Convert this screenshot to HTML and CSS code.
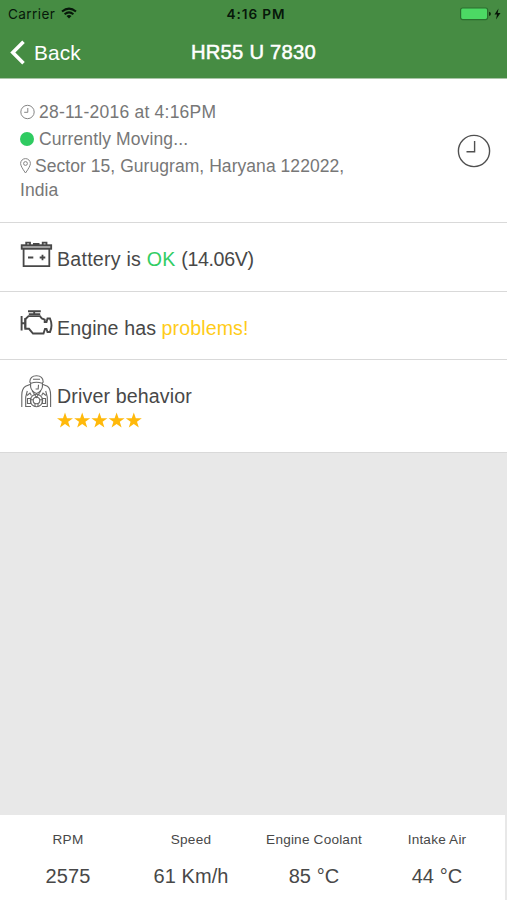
FILE: index.html
```html
<!DOCTYPE html>
<html lang="en">
<head>
<meta charset="utf-8">
<title>HR55 U 7830</title>
<link rel="stylesheet" href="styles.css">
</head>
<body>
<div class="screen">
  <header class="header">
    <div class="status">
      <div class="carrier"><span>Carrier</span>
        <svg class="wifi" width="16" height="12" viewBox="0 0 16 12" fill="none" stroke="#07180a" stroke-width="2"><path d="M1 4.6Q8-1.4 15 4.6M3.6 7.2Q8 3.6 12.4 7.2"/><path d="M8 11.6 5.5 9Q8 7 10.5 9Z" fill="#07180a" stroke="none"/></svg>
      </div>
      <div class="time">4:16 PM</div>
      <div class="power">
        <svg width="42" height="14" viewBox="0 0 42 14"><rect x=".6" y="1" width="27" height="11.6" rx="2" fill="#4cd964" stroke="#2a6e2e" stroke-width="1.2"/><path d="M29 4.7q2 .4 2 2.1t-2 2.1z" fill="#10300f"/><path d="M38.5 1.5 34.5 7.5H37L36 12.5 40.5 6H37.7Z" fill="#071507"/></svg>
      </div>
    </div>
    <nav class="nav">
      <div class="back">
        <svg width="16" height="26" viewBox="0 0 16 26" fill="none" stroke="#fff" stroke-width="3.6"><path d="M14.5 1.8 3.8 12.5 14.5 23.2"/></svg>
        <span>Back</span>
      </div>
      <h1 class="title">HR55 U 7830</h1>
      <div></div>
    </nav>
  </header>
  <main class="list">
    <section class="summary">
      <div class="details">
        <div class="line date"><svg class="line-clock" width="15" height="16" viewBox="0 0 15 16" fill="none" stroke="#858585"><circle cx="7.5" cy="8" r="6.7"/><path d="M7.8 4V8.3H4.2"/></svg>28-11-2016 at 4:16PM</div>
        <div class="line moving"><span class="dot"></span>Currently Moving...</div>
        <div class="line address"><svg class="pin" width="11" height="16" viewBox="0 0 11 16" fill="none" stroke="#858585"><path d="M5.5 15Q.6 8.2.6 5.5a4.9 4.9 0 0 1 9.8 0Q10.4 8.2 5.5 15Z"/><circle cx="5.5" cy="5.5" r="1.9"/></svg>Sector 15, Gurugram, Haryana 122022,<br>India</div>
      </div>
      <svg class="history" width="34" height="34" viewBox="0 0 34 34" fill="none" stroke="#505050" stroke-width="1.4"><circle cx="17" cy="17" r="15.6"/><path d="M17.6 7V17.7H9.5"/></svg>
    </section>
    <section class="row">
      <svg class="row-icon" width="34" height="34" viewBox="0 0 34 34" fill="none" stroke="#484848" stroke-width="1.8"><rect x="1.7" y="4.2" width="29.5" height="3.6" fill="#aaa"/><path d="M3.6 8V25.2H29.3V8M6.2 4V1.6H10V4M22.7 4V1.6H26.5V4M13 3H19.5M8 16.5H13.3M19.7 16.5H25.3M22.5 13.7V19.3"/></svg>
      <div class="label battery">Battery is <span class="ok">OK</span> <span class="volts">(14.06V)</span></div>
    </section>
    <section class="row">
      <svg class="row-icon" width="34" height="34" viewBox="0 0 34 34" fill="none" stroke="#484848" stroke-width="1.9"><path d="M1.6 6V20.5M1.6 13.3H5.3M5.3 8V18.5M8 1.2H20.8M8.8 4.1H20.2M14.2 1.2V4"/><path d="M5.3 9.2 8.5 6.1H20L21.8 8.5 24.7 9.7V12H26.5L27.5 8.5H30Q33 15.5 30 22H27.5L26.5 19H25L23.5 23.5H13L9 18.8H5.3Z"/></svg>
      <div class="label engine">Engine has <span class="warn">problems!</span></div>
    </section>
    <section class="row driver">
      <svg class="row-icon" width="32" height="34" viewBox="0 0 32 34" fill="none" stroke="#666" stroke-width="1.1"><path d="M8.8 7Q9 .8 15.5.8T22.2 7L21 8.3Q15.5 6.2 10 8.3ZM12 4.2H19M9.6 8V12Q10.5 16.4 15.5 18.5 20.5 16.4 21.4 12V8M14.6 14H17.2L17.5 9.8"/><path d="M9.6 9.3 4.6 11.2Q.8 13.5.8 20V32M21.4 9.3 26.4 11.2Q29.6 13.5 29.6 20V32M11 15.5 15.5 22.5 20 15.5M6.3 16 4.7 22V31.5H10M24.7 16 26.3 22V31.5H21M6 20.5 9 18 10.4 20.5M25 20.5 22 18 20.6 20.5"/><circle cx="15.5" cy="25.5" r="6.2"/><circle cx="15.5" cy="25.5" r="3.3"/><path d="M9.5 24.7H12.4M18.6 24.7H21.5M14 28.8V31.5M17 28.8V31.5M6.5 23.5H9.8V28.5H6.5ZM24.5 23.5H21.2V28.5H24.5Z"/></svg>
      <div class="label behavior">Driver behavior
        <div class="stars">
          <svg width="86" height="17" viewBox="0 0 86 17" fill="#ffb90b"><defs><path id="star" d="M8 .5 10 6.2H16L11.2 9.8 13 15.6 8 12.1 3 15.6 4.8 9.8 0 6.2H6Z"/></defs><use href="#star"/><use href="#star" x="17.2"/><use href="#star" x="34.4"/><use href="#star" x="51.6"/><use href="#star" x="68.8"/></svg>
        </div>
      </div>
    </section>
  </main>
  <footer class="metrics">
    <div class="metric"><span class="name">RPM</span><span class="value">2575</span></div>
    <div class="metric"><span class="name">Speed</span><span class="value">61 Km/h</span></div>
    <div class="metric"><span class="name">Engine Coolant</span><span class="value">85 °C</span></div>
    <div class="metric"><span class="name">Intake Air</span><span class="value">44 °C</span></div>
  </footer>
</div>
</body>
</html>
```

FILE: styles.css
```css
* { box-sizing: border-box; }
body { margin: 0; background: #e8e8e8; color: #484848; font-family: "Liberation Sans", Arial, sans-serif; }
svg { display: block; flex: none; }
.screen { width: 507px; height: 900px; display: flex; flex-direction: column; overflow: hidden; }
.header { height: 79px; background: #468c43; border-bottom: 1px solid #a9c5a8; }
.status { height: 27px; display: grid; grid-template-columns: 1fr auto 1fr; align-items: center; padding: 0 5px 0 8px; color: #07180a; font: 13.6px/26px Inter, sans-serif; }
.carrier { display: flex; align-items: center; gap: 6px; letter-spacing: .4px; }
.carrier svg { margin-top: -2px; }
.time { font-weight: 600; font-size: 13.6px; letter-spacing: .9px; padding-left: 2px; }
.power { justify-self: end; }
.nav { height: 51px; display: grid; grid-template-columns: 1fr auto 1fr; align-items: center; padding: 0 0 0 9px; color: #fff; }
.back { display: flex; align-items: center; gap: 9px; font-size: 20.8px; letter-spacing: .15px; }
.title { margin: 0; padding-right: 9px; font-size: 20.2px; font-weight: 400; letter-spacing: .25px; -webkit-text-stroke: .5px #fff; }
.summary { height: 144px; display: flex; align-items: center; justify-content: space-between; padding: 0 16px 0 20px; background: #fff; border-bottom: 1px solid #d9d9d9; }
.details { font-size: 17.5px; color: #777; padding-bottom: 1px; }
.date { letter-spacing: .22px; }
.moving { letter-spacing: .12px; }
.line { height: 27px; display: flex; align-items: center; gap: 4px; line-height: 27px; }
.line.address { display: block; height: 49px; line-height: 24px; padding-top: 1px; letter-spacing: .05px; }
.pin { display: inline-block; vertical-align: -2px; margin-right: 4px; }
.dot { width: 14px; height: 14px; border-radius: 50%; background: #2fcb61; margin-right: 1px; }
.row { height: 68.5px; display: flex; align-items: flex-start; padding: 18px 0 0 20px; background: #fff; border-bottom: 1px solid #d9d9d9; }
.row-icon { width: 34px; margin-right: 3px; }
.label { font-size: 19.6px; line-height: 24px; padding-top: 6px; }
.battery { letter-spacing: .24px; }
.volts { letter-spacing: -.35px; }
.engine { letter-spacing: .1px; }
.behavior { letter-spacing: .14px; }
.ok { color: #32cd64; }
.warn { color: #ffcc18; }
.driver { height: 93px; padding-top: 15px; }
.driver .label { padding-top: 9px; }
.driver .row-icon { width: 32px; margin: 0 4px 0 1px; }
.stars { padding: 4px 0 0; }
.metrics { margin-top: auto; width: 505px; height: 85px; display: grid; grid-template-columns: repeat(4, 123px); padding: 15px 0 0 6.5px; background: #fff; }
.metric { display: flex; flex-direction: column; align-items: center; gap: 15px; }
.name { font-size: 13.6px; line-height: 20px; letter-spacing: .2px; }
.value { font-size: 20px; line-height: 22px; letter-spacing: .1px; }
```
